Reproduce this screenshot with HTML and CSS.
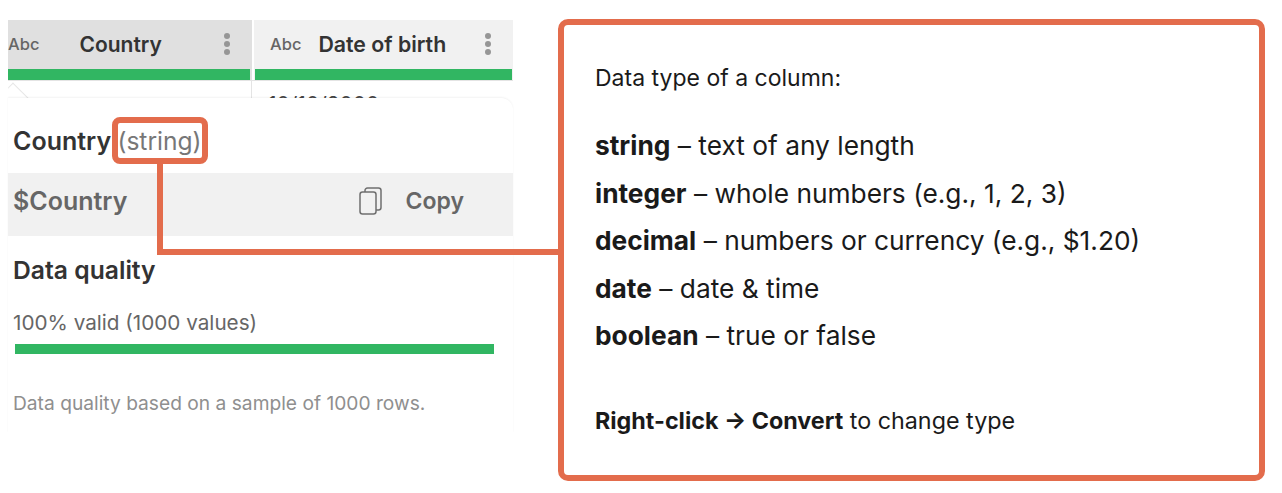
FILE: index.html
```html
<!DOCTYPE html>
<html lang="en">
  <head>
    <meta charset="UTF-8">
    <title>Data type of a column</title>
    <link rel="stylesheet" href="styles.css">
  </head>
  <body>
    <div class="page">
      <section class="panel">
        <div class="table-head">
          <div class="col col-active">
            <div class="col-title">
              <span class="abc">Abc</span>
              <span class="col-name">Country</span>
              <span class="dots"><i></i><i></i><i></i></span>
            </div>
            <div class="quality-bar"></div>
          </div>
          <div class="col col-second">
            <div class="col-title">
              <span class="abc">Abc</span>
              <span class="col-name">Date of birth</span>
              <span class="dots"><i></i><i></i><i></i></span>
            </div>
            <div class="quality-bar"></div>
          </div>
        </div>
        <div class="table-row">
          <div class="cell"></div>
          <div class="cell-second">10/10/2000</div>
          <div class="caret"></div>
        </div>
        <div class="popup">
          <h2 class="popup-title">Country <span class="type-name">(string)</span></h2>
          <div class="copy-row">
            <span class="var-name">$Country</span>
            <span class="copy-btn">
              <svg width="26" height="30" viewBox="0 0 26 30" fill="none" stroke="#6f6f6f" stroke-width="1.5">
                <rect x="2" y="6" width="16" height="22" rx="2.5" fill="#f1f1f1"></rect>
                <path d="M7 6V4.5A2.5 2.5 0 0 1 9.500 2H20.500A2.500 2.500 0 0 1 23 4.500V21.500A2.500 2.500 0 0 1 20.500 24H18"></path>
              </svg>
              <span class="copy-label">Copy</span>
            </span>
          </div>
          <h3 class="quality-title">Data quality</h3>
          <p class="valid">100% valid (1000 values)</p>
          <div class="valid-bar"></div>
          <p class="note">Data quality based on a sample of 1000 rows.</p>
        </div>
      </section>

      <section class="callout">
        <p class="intro">Data type of a column:</p>
        <ul class="types">
          <li><strong>string</strong> – text of any length</li>
          <li><strong>integer</strong> – whole numbers (e.g., 1, 2, 3)</li>
          <li><strong>decimal</strong> – numbers or currency (e.g., $1.20)</li>
          <li><strong>date</strong> – date &amp; time</li>
          <li><strong>boolean</strong> – true or false</li>
        </ul>
        <p class="hint"><strong>Right-click → Convert</strong> to change type</p>
      </section>
    </div>

    <!-- annotation: box round (string) and the line over to the callout -->
    <div class="mark-box"></div>
    <div class="mark-line"></div>
  </body>
</html>
```

FILE: styles.css
```css
* {
  box-sizing: border-box;
}
body {
  margin: 0;
  background: #fff;
  font-family: Inter, "Liberation Sans", sans-serif;
  color: #333;
}
.page {
  display: flex;
  align-items: flex-start;
  padding: 20px 17px 0 8px;
}
.panel {
  width: 505px;
  flex: none;
}
.callout {
  width: 707px;
  height: 462px;
  margin: -1px 0 0 45px;
  padding: 38px 33px 0 31px;
  border: 6px solid #e36c4c;
  border-radius: 10px;
  color: #1a1a1a;
}

/* table header */
.table-head {
  display: flex;
  height: 61px;
  border-bottom: 1px solid #e4e4e4;
}
.col {
  display: flex;
  flex-direction: column;
}
.col-active {
  width: 244px;
  background: #e0e0e0;
}
.col-second {
  width: 259px;
  margin-left: 2px;
  background: #f1f1f1;
}
.col-title {
  display: flex;
  align-items: center;
  height: 49px;
  padding-bottom: 1px;
}
.col-active .col-title {
  padding-right: 22px;
}
.col-second .col-title {
  padding-left: 16px;
  padding-right: 22px;
}
.abc {
  font-size: 16.500px;
  font-weight: 500;
  color: #666;
}
.col-name {
  flex: 1;
  padding-left: 40px;
  font-size: 21px;
  font-weight: 600;
  color: #333;
}
.col-second .col-name {
  padding-left: 17px;
  font-size: 21.300px;
}
.dots {
  display: flex;
  flex-direction: column;
  gap: 2px;
}
.dots i {
  width: 6px;
  height: 6px;
  border-radius: 50%;
  background: #969696;
}
.quality-bar {
  height: 11px;
  background: #31b662;
}
.col-active .quality-bar {
  margin-right: 2px;
}
.col-second .quality-bar {
  margin-left: 1px;
  margin-right: 1px;
}

/* first data row, mostly behind the popup */
.table-row {
  position: relative;
  display: flex;
  height: 17px;
  overflow: hidden;
}
.cell {
  width: 244px;
  border-right: 1px solid #e4e4e4;
}
.cell-second {
  padding: 11px 0 0 16px;
  font-size: 21px;
  color: #444;
}
.caret {
  position: absolute;
  left: -6px;
  top: 6px;
  width: 22px;
  height: 22px;
  background: #fff;
  border-top: 1px solid #e6e6e6;
  border-left: 1px solid #e6e6e6;
  transform: rotate(45deg);
}

/* popup */
.popup {
  position: relative;
  height: 335px;
  background: #fff;
  border-radius: 0 12px 0 0;
  box-shadow: 0 -1px 2px rgba(0, 0, 0, 0.05);
  padding-top: 27px;
}
.popup-title {
  margin: 0 0 0 5px;
  font-size: 25px;
  line-height: 32px;
  font-weight: 600;
  color: #333;
}
.type-name {
  font-size: 24.600px;
  font-weight: 400;
  color: #777;
}
.copy-row {
  display: flex;
  align-items: center;
  justify-content: space-between;
  height: 63px;
  margin-top: 16px;
  padding: 0 49px 8px 5px;
  background: #f1f1f1;
  font-size: 25px;
  font-weight: 600;
  color: #666;
}
.copy-btn {
  display: flex;
  align-items: center;
  gap: 22px;
}
.copy-label {
  font-size: 23px;
}
.quality-title {
  margin: 18px 0 0 5px;
  font-size: 24.700px;
  line-height: 32px;
  font-weight: 600;
  color: #333;
}
.valid {
  margin: 23px 0 0 5px;
  font-size: 20.700px;
  line-height: 28px;
  color: #666;
}
.valid-bar {
  width: 479px;
  height: 10px;
  margin: 7px 0 0 7px;
  background: #31b662;
}
.note {
  margin: 37px 0 0 5px;
  font-size: 19.200px;
  line-height: 24px;
  color: #8f8f8f;
}

/* callout text */
.intro,
.hint {
  margin: 0;
  font-size: 23px;
  line-height: 30px;
}
.types {
  list-style: none;
  margin: 29px 0 0;
  padding: 0;
}
.types li {
  font-size: 26.300px;
  line-height: 47.500px;
}
.hint {
  margin-top: 46px;
  font-size: 23.300px;
}

/* annotation overlay */
.mark-box {
  position: absolute;
  left: 112px;
  top: 117px;
  width: 96px;
  height: 47px;
  border: 6px solid #e36c4c;
  border-radius: 8px;
}
.mark-line {
  position: absolute;
  left: 157px;
  top: 163px;
  width: 402px;
  height: 92px;
  border-left: 6px solid #e36c4c;
  border-bottom: 6px solid #e36c4c;
}
```
